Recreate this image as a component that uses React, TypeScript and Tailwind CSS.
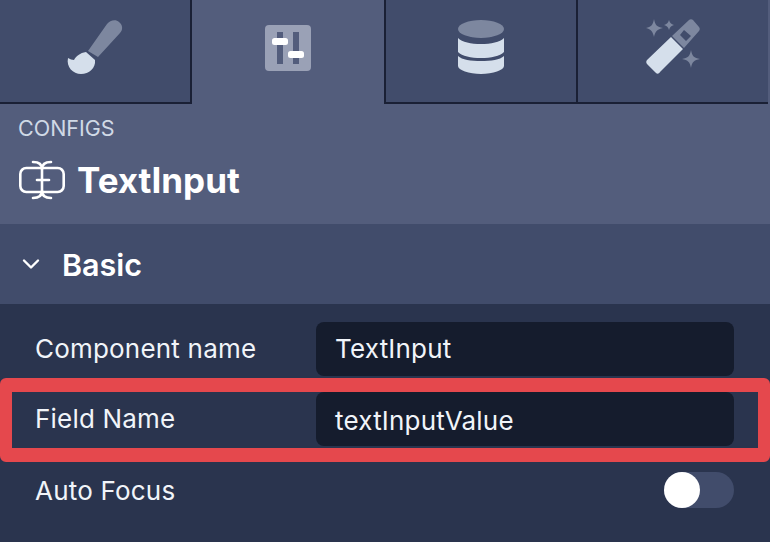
const FONT = "font-['Inter',sans-serif]";

function BrushIcon() {
  return (
    <svg width="64" height="64" viewBox="60 10 64 64" fill="none">
      <path d="M88 51 L107 24 C110 20 116 19 119 22 C123 25 123 30 120 33 L98 57 Z" fill="#7d879f" />
      <path d="M68 58 C70 59 72 60 74 60 C76 56 80 53 86 52 L95 60 C96 68 89 74 81 74 C73 74 66 67 68 58 Z" fill="#d5dfeb" />
    </svg>
  );
}

function SlidersIcon() {
  return (
    <svg width="46" height="46" viewBox="265 25 46 46" fill="none">
      <rect x="265" y="25" width="46" height="46" rx="4" fill="#9aa1b6" />
      <rect x="277" y="32" width="6" height="32" fill="#535d7c" />
      <rect x="293" y="32" width="6" height="32" fill="#535d7c" />
      <rect x="272" y="38" width="16" height="7" rx="2.5" fill="#ffffff" />
      <rect x="288" y="51" width="16" height="7" rx="2.5" fill="#ffffff" />
    </svg>
  );
}

function DatabaseIcon() {
  return (
    <svg width="46" height="54" viewBox="457 20 46 54" fill="none">
      <ellipse cx="480" cy="29" rx="23" ry="9" fill="#7d879f" />
      <path d="M457 38 C461 42 470 44 480 44 C490 44 499 42 503 38 V52 C499 56 490 58 480 58 C470 58 461 56 457 52 Z" fill="#d5dfeb" />
      <path d="M457 56 C461 60 470 61 480 61 C490 61 499 60 503 56 V66 C503 70 492 74 480 74 C468 74 457 70 457 66 Z" fill="#d5dfeb" />
    </svg>
  );
}

function WandIcon() {
  return (
    <svg width="56" height="56" viewBox="645 18 56 56" fill="none">
      <path d="M671 37 L683 49 L660 72 C659 74 657 74 656 73 L647 64 C646 63 646 61 647 60 Z" fill="#d5dfeb" />
      <path fillRule="evenodd" d="M672 36 L689 20 C690 19 692 19 693 20 L699 27 C700 28 700 30 699 31 L684 48 Z M684 30 L680 35 L686 41 L691 36 Z" fill="#7d879f" />
      <path d="M654 19 C655 25 657 27 663 28 C657 29 655 32 654 37 C653 32 651 29 646 28 C651 27 653 25 654 19 Z" fill="#7d879f" />
      <path d="M669 20 C670 23 671 24 674 25 C671 26 670 27 669 30 C668 27 667 26 664 25 C667 24 668 23 669 20 Z" fill="#7d879f" />
      <path d="M691 50 C692 56 694 58 700 59 C694 60 692 62 691 68 C690 62 688 60 682 59 C688 58 690 56 691 50 Z" fill="#7d879f" />
    </svg>
  );
}

function TextInputIcon() {
  return (
    <svg width="46" height="40" viewBox="0 0 46 40" fill="none" stroke="#ffffff" strokeWidth="2.6" strokeLinecap="round" strokeLinejoin="round">
      <rect x="1.3" y="8" width="43.4" height="24" rx="6" />
      <path d="M14 2 C19 2 23 4 23 9 V31 C23 36 19 38 14 38" />
      <path d="M32 2 C27 2 23 4 23 9 M23 31 C23 36 27 38 32 38" />
      <path d="M18 20 H30" />
    </svg>
  );
}

function Tab({ width, children }: { width: string; children: React.ReactNode }) {
  return (
    <div className={`${width} flex items-center justify-center border-b-2 border-r-2 border-[#1a2035] bg-[#414c6b]`}>
      {children}
    </div>
  );
}

function Field({ label, value, valueClass = '-mt-[2px]' }: { label: string; value: string; valueClass?: string }) {
  return (
    <>
      <span className="-ml-px -mt-[2px] w-[281px] text-[26px] tracking-[0.2px] text-[#f1f4f9]">{label}</span>
      <div className="flex h-[54px] w-[418px] items-center rounded-lg bg-[#151c2d] pl-[19px] pr-5 text-[26px] tracking-[0.2px] text-[#f1f4f9]">
        <span className={valueClass}>{value}</span>
      </div>
    </>
  );
}

export default function App() {
  return (
    <div className={`${FONT} flex h-[542px] w-[770px] flex-col overflow-hidden bg-[#2a344e]`}>
      {/* Tabs */}
      <div className="flex h-[104px] bg-[#535d7c]">
        <Tab width="w-[192px]">
          <div className="-ml-[6px] -mt-[18px]"><BrushIcon /></div>
        </Tab>
        <div className="flex w-[192px] items-center justify-center bg-[#535d7c] pb-[8px]">
          <SlidersIcon />
        </div>
        <div className="w-[2px] bg-[#1a2035]" />
        <Tab width="w-[192px]">
          <div className="-mt-[8px]"><DatabaseIcon /></div>
        </Tab>
        <div className="flex w-[190px] items-center justify-center border-b-2 border-[#1a2035] bg-[#414c6b] pb-[10px]">
          <WandIcon />
        </div>
      </div>

      {/* Header */}
      <div className="flex h-[120px] flex-col bg-[#535d7c] pl-[19px]">
        <span className="-ml-px mt-[12px] text-[21.5px] leading-6 text-[#d0d9e6]">CONFIGS</span>
        <div className="mt-[20px] flex items-center gap-[12px]">
          <TextInputIcon />
          <span className="text-[35px] font-bold leading-10 text-white">TextInput</span>
        </div>
      </div>

      {/* Section title */}
      <div className="flex h-[80px] items-center bg-[#414c6b] pl-[22px]">
        <svg width="18" height="18" viewBox="0 0 18 18" fill="none" stroke="#ffffff" strokeWidth="2.4" strokeLinecap="round" strokeLinejoin="round">
          <path d="M2 5.5 L9 12.5 L16 5.5" />
        </svg>
        <span className="ml-[22px] mt-[2px] text-[30.5px] font-semibold text-white">Basic</span>
      </div>

      {/* Rows */}
      <div className="flex flex-col gap-4 px-9 pt-[18px]">
        <div className="flex items-center">
          <Field label="Component name" value="TextInput" />
        </div>
        <div className="relative flex items-center">
          <Field label="Field Name" value="textInputValue" valueClass="mt-[3px]" />
          <div className="absolute -left-9 -right-9 -top-[14px] -bottom-[16px] rounded-md border-x-[12px] border-y-[14px] border-[#e5484d]" />
        </div>
        <div className="flex h-[56px] items-center justify-between">
          <span className="-ml-px text-[26px] tracking-[0.2px] text-[#f1f4f9]">Auto Focus</span>
          <div className="h-9 w-[70px] rounded-full bg-[#414c6b]">
            <div className="h-9 w-9 rounded-full bg-white" />
          </div>
        </div>
      </div>
    </div>
  );
}
